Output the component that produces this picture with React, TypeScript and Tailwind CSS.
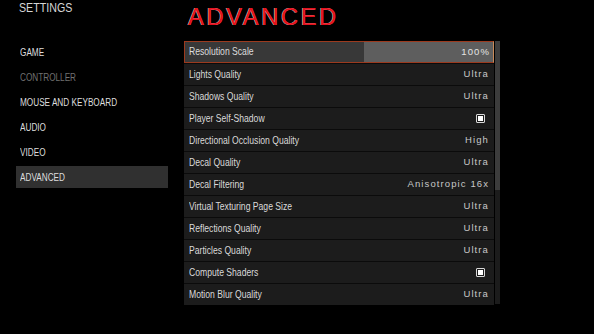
const menu = [
  { label: "GAME", dim: false },
  { label: "CONTROLLER", dim: true },
  { label: "MOUSE AND KEYBOARD", dim: false },
  { label: "AUDIO", dim: false },
  { label: "VIDEO", dim: false },
  { label: "ADVANCED", dim: false, active: true },
];

const rows: { label: string; value?: string; check?: boolean }[] = [
  { label: "Resolution Scale", value: "100%" },
  { label: "Lights Quality", value: "Ultra" },
  { label: "Shadows Quality", value: "Ultra" },
  { label: "Player Self-Shadow", check: true },
  { label: "Directional Occlusion Quality", value: "High" },
  { label: "Decal Quality", value: "Ultra" },
  { label: "Decal Filtering", value: "Anisotropic 16x" },
  { label: "Virtual Texturing Page Size", value: "Ultra" },
  { label: "Reflections Quality", value: "Ultra" },
  { label: "Particles Quality", value: "Ultra" },
  { label: "Compute Shaders", check: true },
  { label: "Motion Blur Quality", value: "Ultra" },
];

// condensed look: Arial metrics squeezed horizontally
const narrow = "inline-block origin-left scale-x-[0.82] whitespace-nowrap font-['Liberation_Sans',sans-serif]";
const wide = "font-['Liberation_Sans',sans-serif] text-[9.5px] tracking-[1.1px]";

function Check() {
  return (
    <span className="flex h-[9px] w-[9px] items-center justify-center rounded-[1px] border border-[#d8d8d8]">
      <span className="h-[5px] w-[5px] bg-white" />
    </span>
  );
}

export default function App() {
  return (
    <div className="flex h-[334px] w-[594px] overflow-hidden bg-black text-[#dcdcdc]">
      {/* Sidebar */}
      <div className="w-[168px] shrink-0 pl-[16px]">
        <div className="h-[41px] pl-[3px] leading-[12px]">
          <span className={`${narrow} scale-x-[0.75] text-[13px] text-[#d6d6d6]`}>SETTINGS</span>
        </div>
        <div className="flex flex-col gap-[3px]">
          {menu.map((m) => (
            <div
              key={m.label}
              className={`flex h-[22px] items-center pl-[4px] ${m.active ? "bg-[#303030]" : ""} ${
                m.dim ? "text-[#707070]" : "text-[#dedede]"
              }`}
            >
              <span className={`${narrow} scale-x-[0.78] text-[10px]`}>{m.label}</span>
            </div>
          ))}
        </div>
      </div>

      {/* Main */}
      <div className="ml-[16px] flex flex-col">
        <div className="h-[41px] pl-[4px] pt-[3px]">
          <h1 className="font-['Liberation_Sans',sans-serif] text-[24px] leading-[28px] tracking-[2.4px] text-[#e3111d] [text-shadow:-0.5px_-0.5px_0_#ffe0e0]">
            ADVANCED
          </h1>
        </div>
        <div className="flex gap-[1px]">
          <div className="flex w-[310px] flex-col bg-[#0b0b0b]">
            {rows.map((r, i) =>
              i === 0 ? (
                <div
                  key={r.label}
                  className="flex h-[22px] border border-[#9c3a1e] border-r-[#c88a5a]"
                >
                  <div className="flex w-[179px] items-center bg-[#383838] pl-[4px]">
                    <span className={`${narrow} scale-x-[0.8] text-[10.5px] text-[#dedede]`}>{r.label}</span>
                  </div>
                  <div className={`flex flex-1 items-center justify-end bg-[#5e5e5e] pr-[3px] text-[#e4e4e4] ${wide}`}>
                    {r.value}
                  </div>
                </div>
              ) : (
                <div
                  key={r.label}
                  className="flex h-[22px] items-center justify-between border-t border-[#0b0b0b] bg-[#1c1c1c] pl-[5px] pr-[5px]"
                >
                  <span className={`${narrow} scale-x-[0.8] text-[10.5px] text-[#dadada]`}>{r.label}</span>
                  {r.check ? (
                    <span className="pr-[4px]">
                      <Check />
                    </span>
                  ) : (
                    <span className={`text-[#c8c8c8] ${wide}`}>{r.value}</span>
                  )}
                </div>
              )
            )}
          </div>
          <div className="flex h-[263px] w-[5px] flex-col bg-[#1c1c1c]">
            <div className="h-[149px] bg-[#3c3c3c]" />
          </div>
        </div>
      </div>
    </div>
  );
}
